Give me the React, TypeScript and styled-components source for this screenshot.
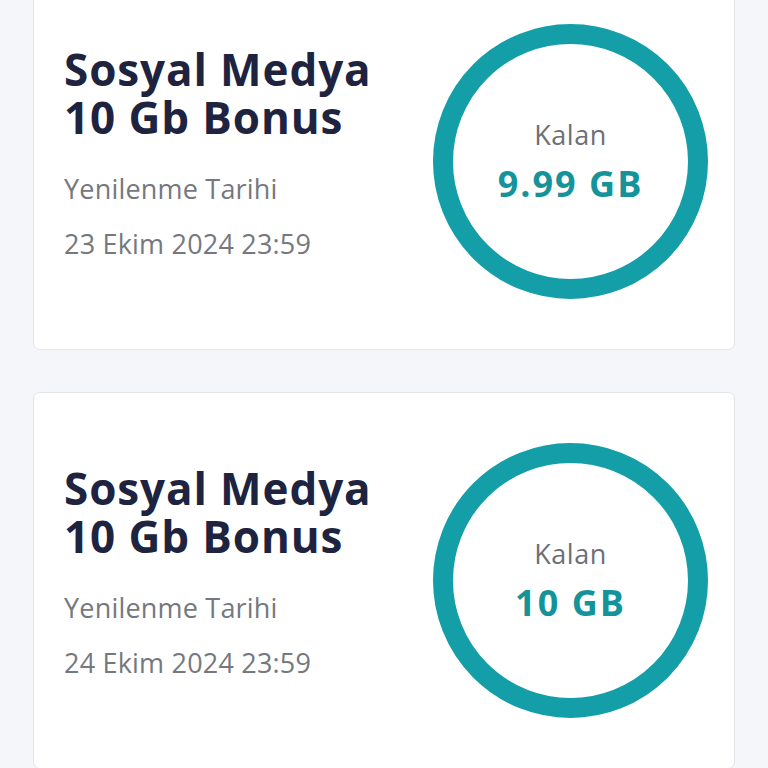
import * as React from 'react';
import styled, { createGlobalStyle } from 'styled-components';

const packages = [
  { name: ['Sosyal Medya', '10 Gb Bonus'], renew: '23 Ekim 2024 23:59', left: '9.99 GB' },
  { name: ['Sosyal Medya', '10 Gb Bonus'], renew: '24 Ekim 2024 23:59', left: '10 GB' },
];

const GlobalStyle = createGlobalStyle`
  html, body {
    margin: 0;
    padding: 0;
    background: #f5f6f9;
    font-family: "Open Sans", Lato, sans-serif;
    overflow: hidden;
  }
`;

const Ring: React.FC = () => (
  <Gauge.Svg viewBox="0 0 275 275">
    <circle cx="137.5" cy="137.5" r="127.5" fill="none" stroke="#139ea8" strokeWidth="20" />
  </Gauge.Svg>
);

const App: React.FC = () => (
  <>
    <GlobalStyle />
    <List>
      {packages.map((pkg, idx) => (
        <Card key={`pkg-${idx}`}>
          <Info>
            <Title>
              {pkg.name[0]}
              <br />
              {pkg.name[1]}
            </Title>
            <Label className="first">Yenilenme Tarihi</Label>
            <Label>{pkg.renew}</Label>
          </Info>
          <Gauge.Wrap>
            <Ring />
            <Gauge.Center>
              <Gauge.Caption>Kalan</Gauge.Caption>
              <Gauge.Value>{pkg.left}</Gauge.Value>
            </Gauge.Center>
          </Gauge.Wrap>
        </Card>
      ))}
    </List>
  </>
);

export default App;

const List = styled.div`
  display: flex;
  flex-direction: column;
  gap: 42px;
  margin: -27px 33px 0;
`;

const Card = styled.div`
  height: 377px;
  box-sizing: border-box;
  background: #ffffff;
  border: 1.5px solid #e4e6ea;
  border-radius: 7px;
  display: flex;
  align-items: flex-start;
  justify-content: space-between;
  padding: 0 26px 0 30px;
`;

const Info = styled.div`
  display: flex;
  flex-direction: column;
  margin-top: 70.5px;
`;

const Title = styled.div`
  font-size: 44px;
  font-weight: 700;
  line-height: 48px;
  letter-spacing: 0.9px;
  color: #1e2440;
  white-space: nowrap;
`;

const Label = styled.div`
  font-size: 27px;
  line-height: 55px;
  letter-spacing: 0.2px;
  color: #75787e;
  white-space: nowrap;

  &.first {
    margin-top: 20.5px;
  }
`;

const Gauge = {
  Wrap: styled.div`
    position: relative;
    width: 275px;
    height: 275px;
    margin-top: 49.5px;
  `,
  Svg: styled.svg`
    width: 100%;
    height: 100%;
    display: block;
  `,
  Center: styled.div`
    position: absolute;
    inset: 0;
    display: flex;
    flex-direction: column;
    align-items: center;
    padding-top: 95px;
    gap: 13px;
  `,
  Caption: styled.div`
    font-size: 27px;
    line-height: 32px;
    letter-spacing: 0.5px;
    color: #6c6f76;
  `,
  Value: styled.div`
    font-size: 36px;
    line-height: 40px;
    font-weight: 700;
    letter-spacing: 2px;
    color: #14939a;
  `,
};
